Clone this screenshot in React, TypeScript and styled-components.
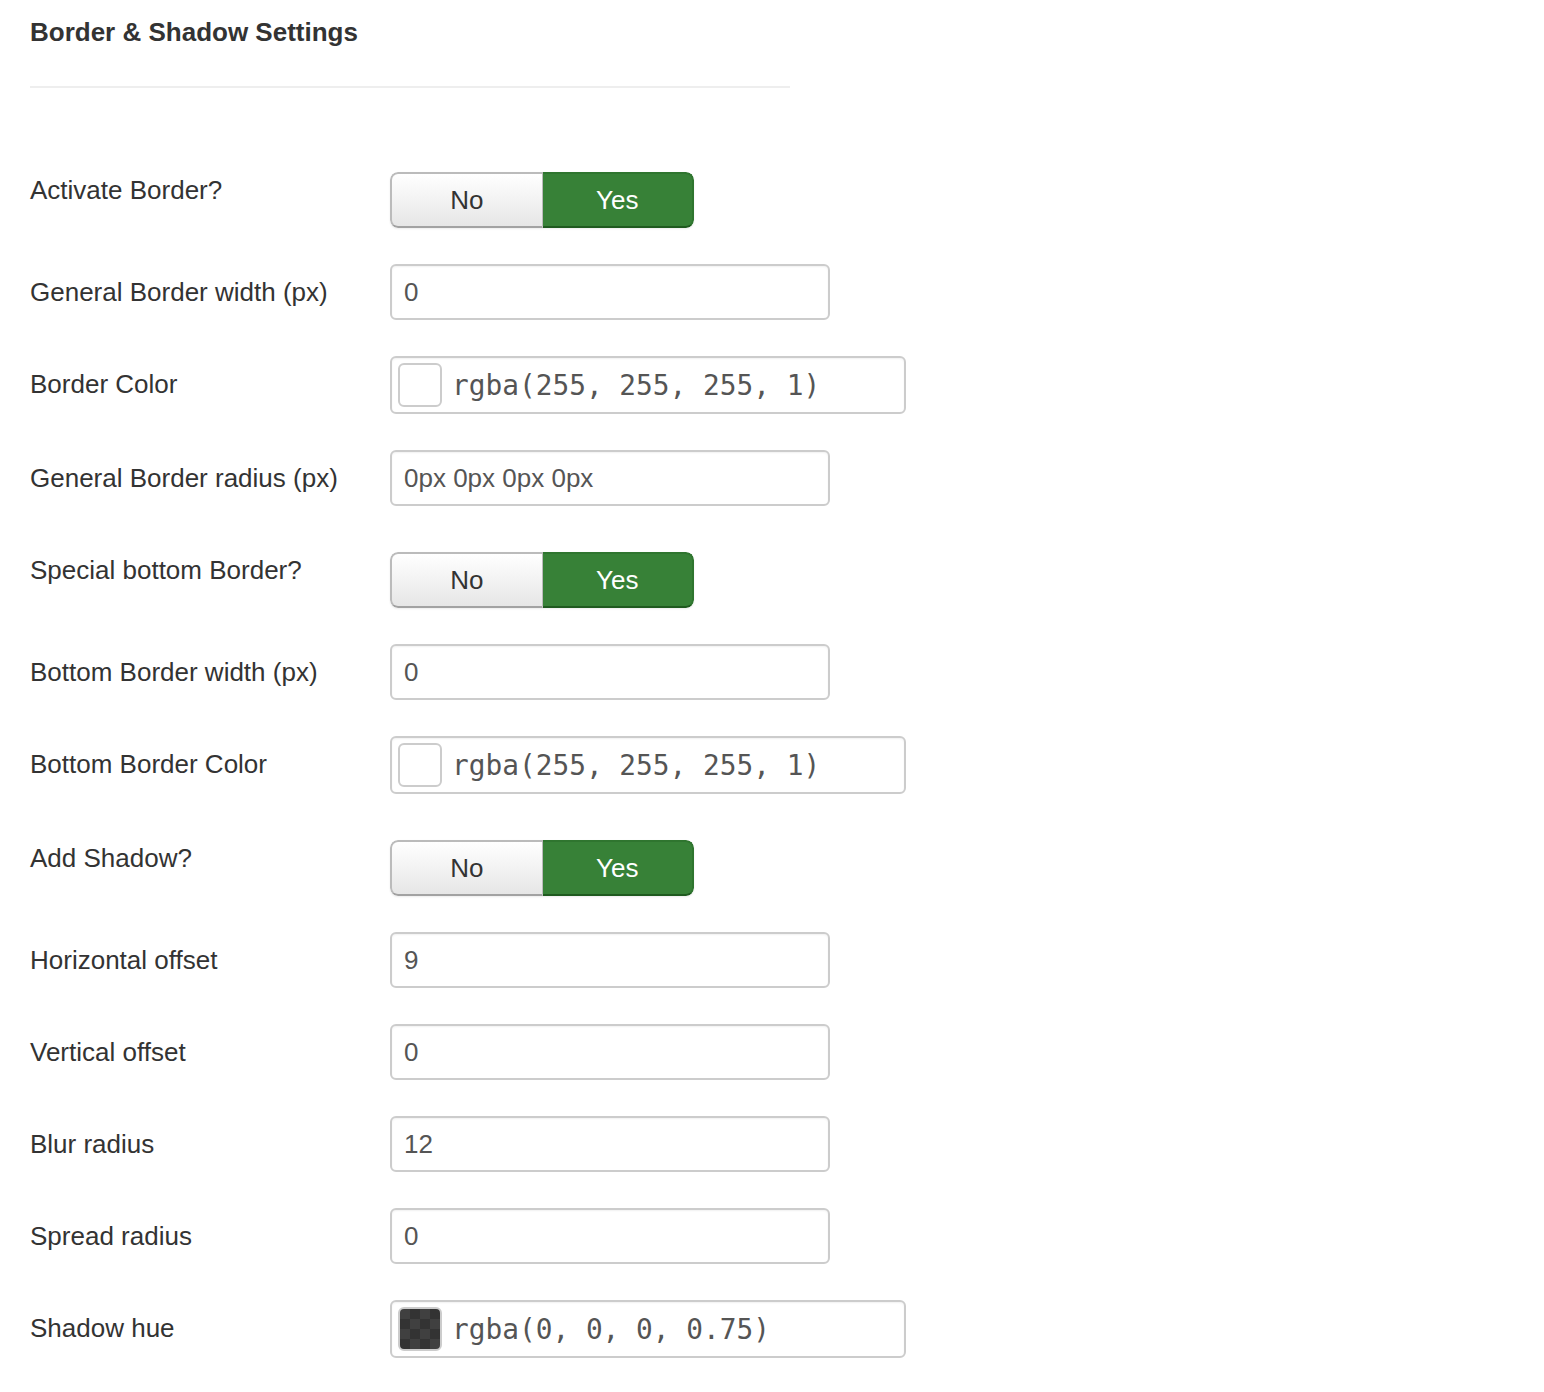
import React from "react";
import styled, { createGlobalStyle } from "styled-components";

const Global = createGlobalStyle`
  html, body { margin: 0; padding: 0; background: #fff; }
  body { font-family: "Liberation Sans", Arial, Helvetica, sans-serif; color: #333; }
`;

const Page = styled.div`
  padding: 14px 30px 30px 30px;
`;

const Heading = styled.h2`
  margin: 0;
  font-size: 26px;
  line-height: 36px;
  font-weight: bold;
  color: #333;
`;

const Rule = styled.hr`
  width: 760px;
  margin: 36px 0 0 0;
  border: 0;
  border-top: 2px solid #eee;
`;

const Form = styled.div`
  display: flex;
  flex-direction: column;
  gap: 36px;
  margin-top: 74px;
`;

const Row = styled.div`
  display: flex;
  align-items: flex-start;
`;

const Label = styled.div`
  width: 360px;
  flex: none;
  font-size: 26px;
  line-height: 56px;
  height: 56px;
  color: #333;
`;

const Switch = styled.div`
  display: flex;
  margin-top: 10px;
  width: 304px;
  height: 56px;
  border-radius: 8px;
  overflow: hidden;
  box-shadow: 0 1px 2px rgba(0, 0, 0, 0.08);
`;

const SwitchOption = styled.div<{ $active: boolean; $side: "left" | "right" }>`
  flex: 1;
  display: flex;
  align-items: center;
  justify-content: center;
  font-size: 26px;
  box-sizing: border-box;
  ${(p) =>
    p.$active
      ? `
    background: #378137;
    color: #fff;
    border: 2px solid #2f752f;
    border-bottom-color: #1f5a1f;
  `
      : `
    background: linear-gradient(#ffffff, #e6e6e6);
    color: #333;
    border: 2px solid #bbbbbb;
    border-bottom-color: #a2a2a2;
  `}
  ${(p) =>
    p.$side === "left"
      ? `border-radius: 8px 0 0 8px; border-right-width: 1px;`
      : `border-radius: 0 8px 8px 0; border-left-width: 0;`}
`;

const TextInput = styled.div`
  box-sizing: border-box;
  width: 440px;
  height: 56px;
  border: 2px solid #cccccc;
  border-radius: 6px;
  padding: 0 12px;
  display: flex;
  align-items: center;
  font-size: 26px;
  color: #555;
  box-shadow: inset 0 1px 2px rgba(0, 0, 0, 0.06);
`;

const ColorInput = styled.div`
  box-sizing: border-box;
  width: 516px;
  height: 58px;
  border: 2px solid #cccccc;
  border-radius: 6px;
  padding: 0 6px;
  display: flex;
  align-items: center;
  gap: 10px;
  box-shadow: inset 0 1px 2px rgba(0, 0, 0, 0.06);
`;

const Swatch = styled.div<{ $dark: boolean }>`
  box-sizing: border-box;
  width: 44px;
  height: 44px;
  border-radius: 6px;
  border: 2px solid #cccccc;
  flex: none;
  background: ${(p) =>
    p.$dark
      ? "repeating-conic-gradient(#333333 0% 25%, #404040 0% 50%) 0 0 / 20px 20px"
      : "#ffffff"};
`;

const ColorText = styled.span`
  font-family: "DejaVu Sans Mono", "Liberation Mono", monospace;
  font-size: 27.8px;
  color: #555;
  letter-spacing: 0;
`;

type Field =
  | { kind: "switch"; label: string; value: boolean }
  | { kind: "text"; label: string; value: string }
  | { kind: "color"; label: string; value: string; dark?: boolean };

const fields: Field[] = [
  { kind: "switch", label: "Activate Border?", value: true },
  { kind: "text", label: "General Border width (px)", value: "0" },
  { kind: "color", label: "Border Color", value: "rgba(255, 255, 255, 1)" },
  { kind: "text", label: "General Border radius (px)", value: "0px 0px 0px 0px" },
  { kind: "switch", label: "Special bottom Border?", value: true },
  { kind: "text", label: "Bottom Border width (px)", value: "0" },
  { kind: "color", label: "Bottom Border Color", value: "rgba(255, 255, 255, 1)" },
  { kind: "switch", label: "Add Shadow?", value: true },
  { kind: "text", label: "Horizontal offset", value: "9" },
  { kind: "text", label: "Vertical offset", value: "0" },
  { kind: "text", label: "Blur radius", value: "12" },
  { kind: "text", label: "Spread radius", value: "0" },
  { kind: "color", label: "Shadow hue", value: "rgba(0, 0, 0, 0.75)", dark: true },
];

function Control({ f }: { f: Field }) {
  if (f.kind === "switch") {
    return (
      <Switch>
        <SwitchOption $active={!f.value} $side="left">No</SwitchOption>
        <SwitchOption $active={f.value} $side="right">Yes</SwitchOption>
      </Switch>
    );
  }
  if (f.kind === "text") {
    return <TextInput>{f.value}</TextInput>;
  }
  return (
    <ColorInput>
      <Swatch $dark={!!f.dark} />
      <ColorText>{f.value}</ColorText>
    </ColorInput>
  );
}

export default function App() {
  return (
    <Page>
      <Global />
      <Heading>Border &amp; Shadow Settings</Heading>
      <Rule />
      <Form>
        {fields.map((f) => (
          <Row key={f.label}>
            <Label>{f.label}</Label>
            <Control f={f} />
          </Row>
        ))}
      </Form>
    </Page>
  );
}
